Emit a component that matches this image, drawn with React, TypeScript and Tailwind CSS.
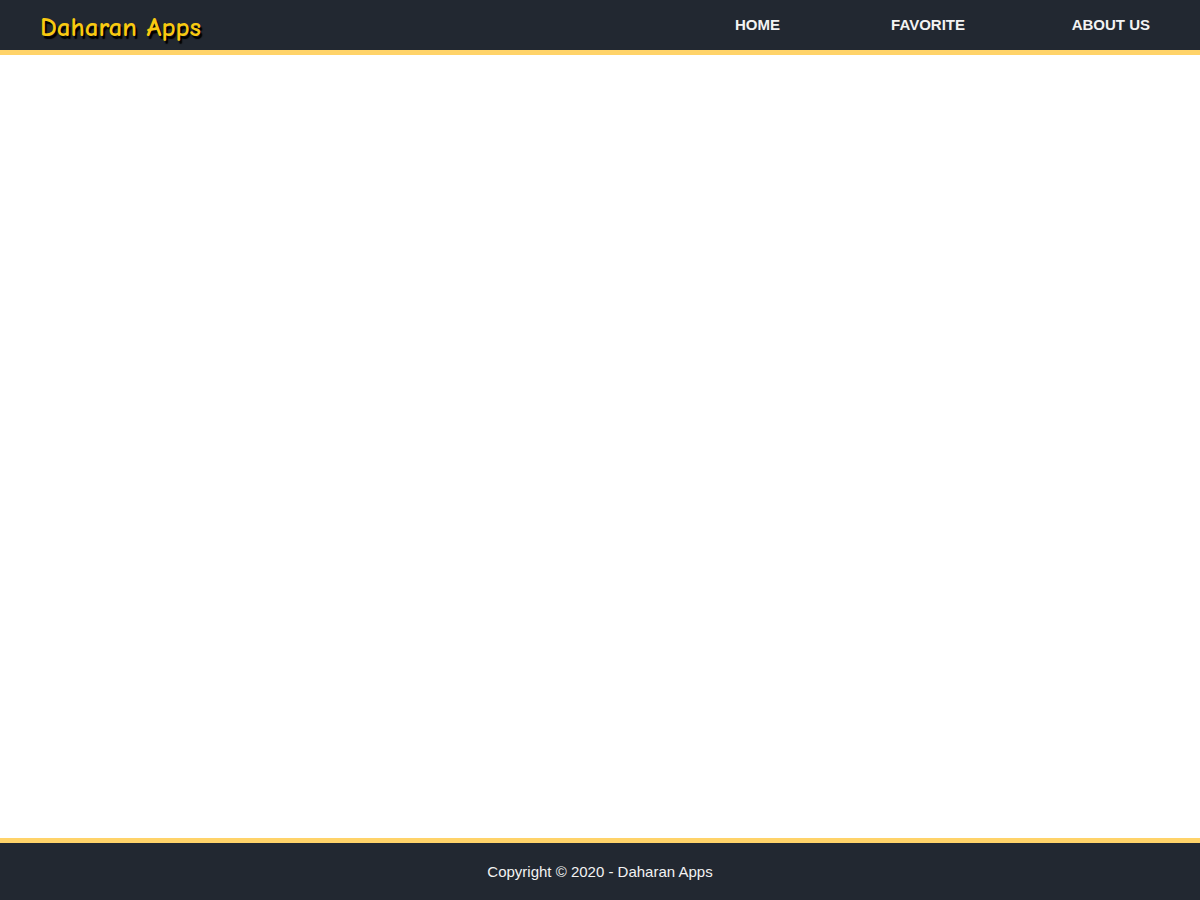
const links = [
  { label: "HOME", href: "#home" },
  { label: "FAVORITE", href: "#favorite" },
  { label: "ABOUT US", href: "#about" },
];

export default function App() {
  return (
    <div className="flex min-h-screen flex-col bg-white font-['Liberation_Sans',Arial,sans-serif]">
      <header className="flex items-center justify-between border-b-5 border-[#ffd369] bg-[#222831] pr-[50px] pl-10">
        <h1 className="pt-[6px] text-[27px] leading-11 font-bold text-[#f9ca10] [text-shadow:2px_3px_1px_#000] font-['Comic_Sans_MS','Comic_Neue',cursive]">
          Daharan Apps
        </h1>
        <nav>
          <ul className="flex">
            {links.map((link) => (
              <li key={link.label} className="w-[185px] text-right">
                <a href={link.href} className="text-[15px] leading-6 font-bold text-[#f3f3f3]">
                  {link.label}
                </a>
              </li>
            ))}
          </ul>
        </nav>
      </header>
      <main className="flex-1" />
      <footer className="border-t-5 border-[#ffd369] bg-[#222831] pt-[17px] pb-4 text-center text-[15px] leading-6 text-[#f3f3f3]">
        <p>Copyright © 2020 - Daharan Apps</p>
      </footer>
    </div>
  );
}
